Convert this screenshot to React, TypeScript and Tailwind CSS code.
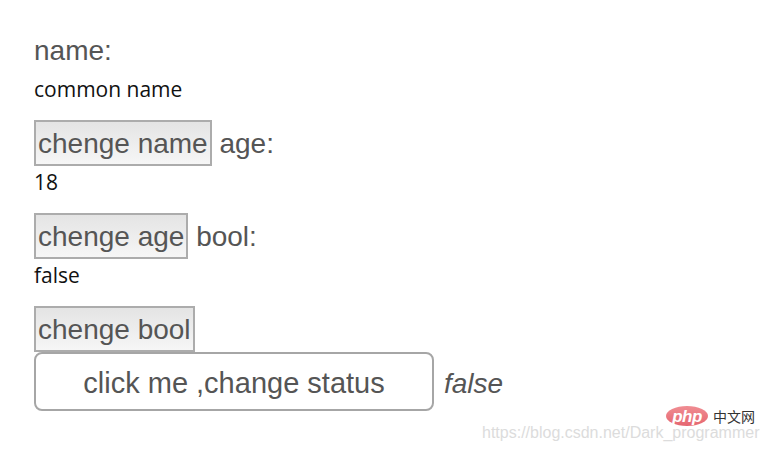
import React from "react";

const btn =
  "inline-block h-[46px] px-[2px] pt-[6px] pb-[4px] leading-[32px] border-2 border-[#acacac] bg-gradient-to-b from-[#e4e4e4] to-[#f6f6f6] text-[#555] align-baseline";

const val =
  "text-[21px] leading-[29px] text-[#111] pt-[2px] mb-[16px] font-['Open_Sans',sans-serif]";

export default function App() {
  return (
    <div
      className="relative w-[766px] h-[450px] bg-white overflow-hidden pl-[34px] pt-[35px]"
      style={{ fontFamily: '"Liberation Sans", Arial, sans-serif' }}
    >
      <div className="text-[28px] leading-[32px] text-[#555] mb-[6px]">name:</div>
      <div className={val}>common name</div>

      <div className="text-[28px] text-[#555] whitespace-nowrap">
        <button className={btn}>chenge name</button> age:
      </div>
      <div className={val}>18</div>

      <div className="text-[28px] text-[#555] whitespace-nowrap">
        <button className={btn}>chenge age</button> bool:
      </div>
      <div className={val}>false</div>

      <div className="text-[28px] text-[#555]">
        <button className={btn}>chenge bool</button>
      </div>

      <div className="flex items-center gap-[10px] text-[28px] text-[#555]">
        <button className="w-[400px] h-[59px] rounded-[8px] border-2 border-[#a6a6a6] bg-white pt-[3px] text-[29px] leading-[32px] text-[#555]">
          click me ,change status
        </button>
        <em className="italic leading-[32px] pt-[4px]">false</em>
      </div>

      <div className="absolute left-[666px] top-[406px] flex items-center gap-[5px]">
        <div className="w-[42px] h-[20px] rounded-[50%] bg-gradient-to-b from-[#f08d93] to-[#e56670] flex items-center justify-center">
          <span className="text-white italic font-bold text-[17px] leading-none tracking-[-0.5px] font-['Liberation_Sans',sans-serif]">
            php
          </span>
        </div>
        <span className="text-[14px] leading-none text-[#333] font-['Noto_Sans_CJK_SC',sans-serif]">中文网</span>
      </div>
      <div className="absolute left-[482px] top-[423px] text-[16px] leading-[20px] text-[#dcdcdc] whitespace-nowrap">
        https://blog.csdn.net/Dark_programmer
      </div>
    </div>
  );
}
